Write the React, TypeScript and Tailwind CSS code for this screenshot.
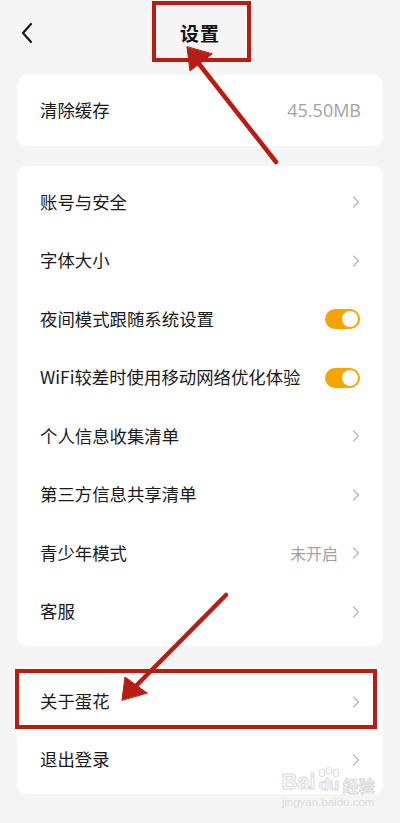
import React from 'react';

const Chevron = () => (
  <svg width="8" height="14" viewBox="0 0 8 14" className="shrink-0">
    <polyline points="1.5,2 6.5,7 1.5,12" fill="none" stroke="#b8b8b8" strokeWidth="1.3" strokeLinecap="round" strokeLinejoin="round" />
  </svg>
);

const Toggle = () => (
  <div className="w-[35px] h-[20px] rounded-full bg-[#f7a400] flex items-center justify-end pr-[2px]">
    <div className="w-[16px] h-[16px] rounded-full bg-white" />
  </div>
);

type Row = { label: string; value?: string; toggle?: boolean };

const mainRows: Row[] = [
  { label: '账号与安全' },
  { label: '字体大小' },
  { label: '夜间模式跟随系统设置', toggle: true },
  { label: 'WiFi较差时使用移动网络优化体验', toggle: true },
  { label: '个人信息收集清单' },
  { label: '第三方信息共享清单' },
  { label: '青少年模式', value: '未开启' },
  { label: '客服' },
];

const SettingRow = ({ row, h }: { row: Row; h: string }) => (
  <div className={`flex items-center justify-between pl-[23px] pr-[23px] ${h}`}>
    <span className="text-[17.4px] text-[#1a1a1a] -mt-[1px]">{row.label}</span>
    <div className="flex items-center gap-[14px]">
      {row.value && <span className="text-[16px] text-[#a3a3a3]">{row.value}</span>}
      {row.toggle ? <Toggle /> : <Chevron />}
    </div>
  </div>
);

const App = () => {
  return (
    <div
      className="relative w-[400px] h-[823px] bg-[#f5f5f5] overflow-hidden"
      style={{ fontFamily: '"Noto Sans CJK SC", "Noto Sans", sans-serif' }}
    >
      {/* Header */}
      <div className="relative h-[66px] flex items-center justify-center">
        <svg width="14" height="22" viewBox="0 0 14 22" className="absolute left-[20px] top-[22px]">
          <polyline points="11,2 3,11 11,20" fill="none" stroke="#1a1a1a" strokeWidth="2.2" strokeLinecap="round" strokeLinejoin="round" />
        </svg>
        <span className="text-[19px] font-bold text-[#111] tracking-[1px]">设置</span>
      </div>

      {/* Cache card */}
      <div className="mx-[17px] mt-[9px] bg-white rounded-[10px] h-[71px] flex items-center justify-between pl-[23px] pr-[22px]">
        <span className="text-[17.4px] text-[#1a1a1a]">清除缓存</span>
        <span className="text-[18px] text-[#a3a3a3]" style={{ fontFamily: '"Open Sans", sans-serif' }}>45.50MB</span>
      </div>

      {/* Main settings */}
      <div className="mx-[17px] mt-[20px] bg-white rounded-[10px] pt-[7px] pb-[5px]">
        {mainRows.map((row) => (
          <SettingRow key={row.label} row={row} h="h-[58.5px]" />
        ))}
      </div>

      {/* About / logout */}
      <div className="mx-[17px] mt-[22px] bg-white rounded-[10px] py-[5px]">
        <SettingRow row={{ label: '关于蛋花' }} h="h-[58px]" />
        <SettingRow row={{ label: '退出登录' }} h="h-[58px]" />
      </div>

      {/* Watermark */}
      <div className="absolute left-[282px] top-[767px] w-[92px] flex flex-col items-center leading-none whitespace-nowrap">
        <div className="flex items-end flex-nowrap">
          <span className="text-[22px] font-bold" style={{ fontFamily: '"Liberation Sans", sans-serif', WebkitTextStroke: '1px #dcdcdc', color: '#fafafa' }}>Bai</span>
          <div className="relative w-[26px] h-[26px]">
            <svg width="26" height="26" viewBox="0 0 26 26" className="absolute left-0 top-0">
              <g fill="#fafafa" stroke="#dcdcdc" strokeWidth="1">
                <ellipse cx="6" cy="6" rx="3" ry="4" />
                <ellipse cx="13" cy="3.5" rx="3" ry="3.5" />
                <ellipse cx="20" cy="6" rx="3" ry="4" />
              </g>
            </svg>
            <span className="absolute left-[3px] bottom-0 text-[17px] font-bold" style={{ fontFamily: '"Liberation Sans", sans-serif', WebkitTextStroke: '1px #dcdcdc', color: '#fafafa' }}>du</span>
          </div>
          <span className="text-[16px] font-bold ml-[1px]" style={{ WebkitTextStroke: '1px #dcdcdc', color: '#fafafa' }}>经验</span>
        </div>
        <span className="text-[11.5px] mt-[4px] text-[#dcdcdc]" style={{ fontFamily: '"Liberation Sans", sans-serif' }}>jingyan.baidu.com</span>
      </div>

      {/* Annotations */}
      <div className="absolute left-[152px] top-[1px] w-[99px] h-[61px] border-[4px] border-[#b81d13]" />
      <div className="absolute left-[15px] top-[669px] w-[362px] h-[60px] border-[4px] border-[#b81d13]" />
      <svg width="400" height="823" viewBox="0 0 400 823" className="absolute left-0 top-0 pointer-events-none">
        <g stroke="#b81d13" strokeWidth="4.5" strokeLinecap="round" fill="#b81d13">
          <line x1="276" y1="162" x2="192" y2="55" />
          <polygon points="187,47 190,71 212,54" strokeWidth="1" strokeLinejoin="round" />
          <line x1="226" y1="595" x2="130" y2="692" />
          <polygon points="122,700 125,677 147,693" strokeWidth="1" strokeLinejoin="round" />
        </g>
      </svg>
    </div>
  );
};

export default App;
